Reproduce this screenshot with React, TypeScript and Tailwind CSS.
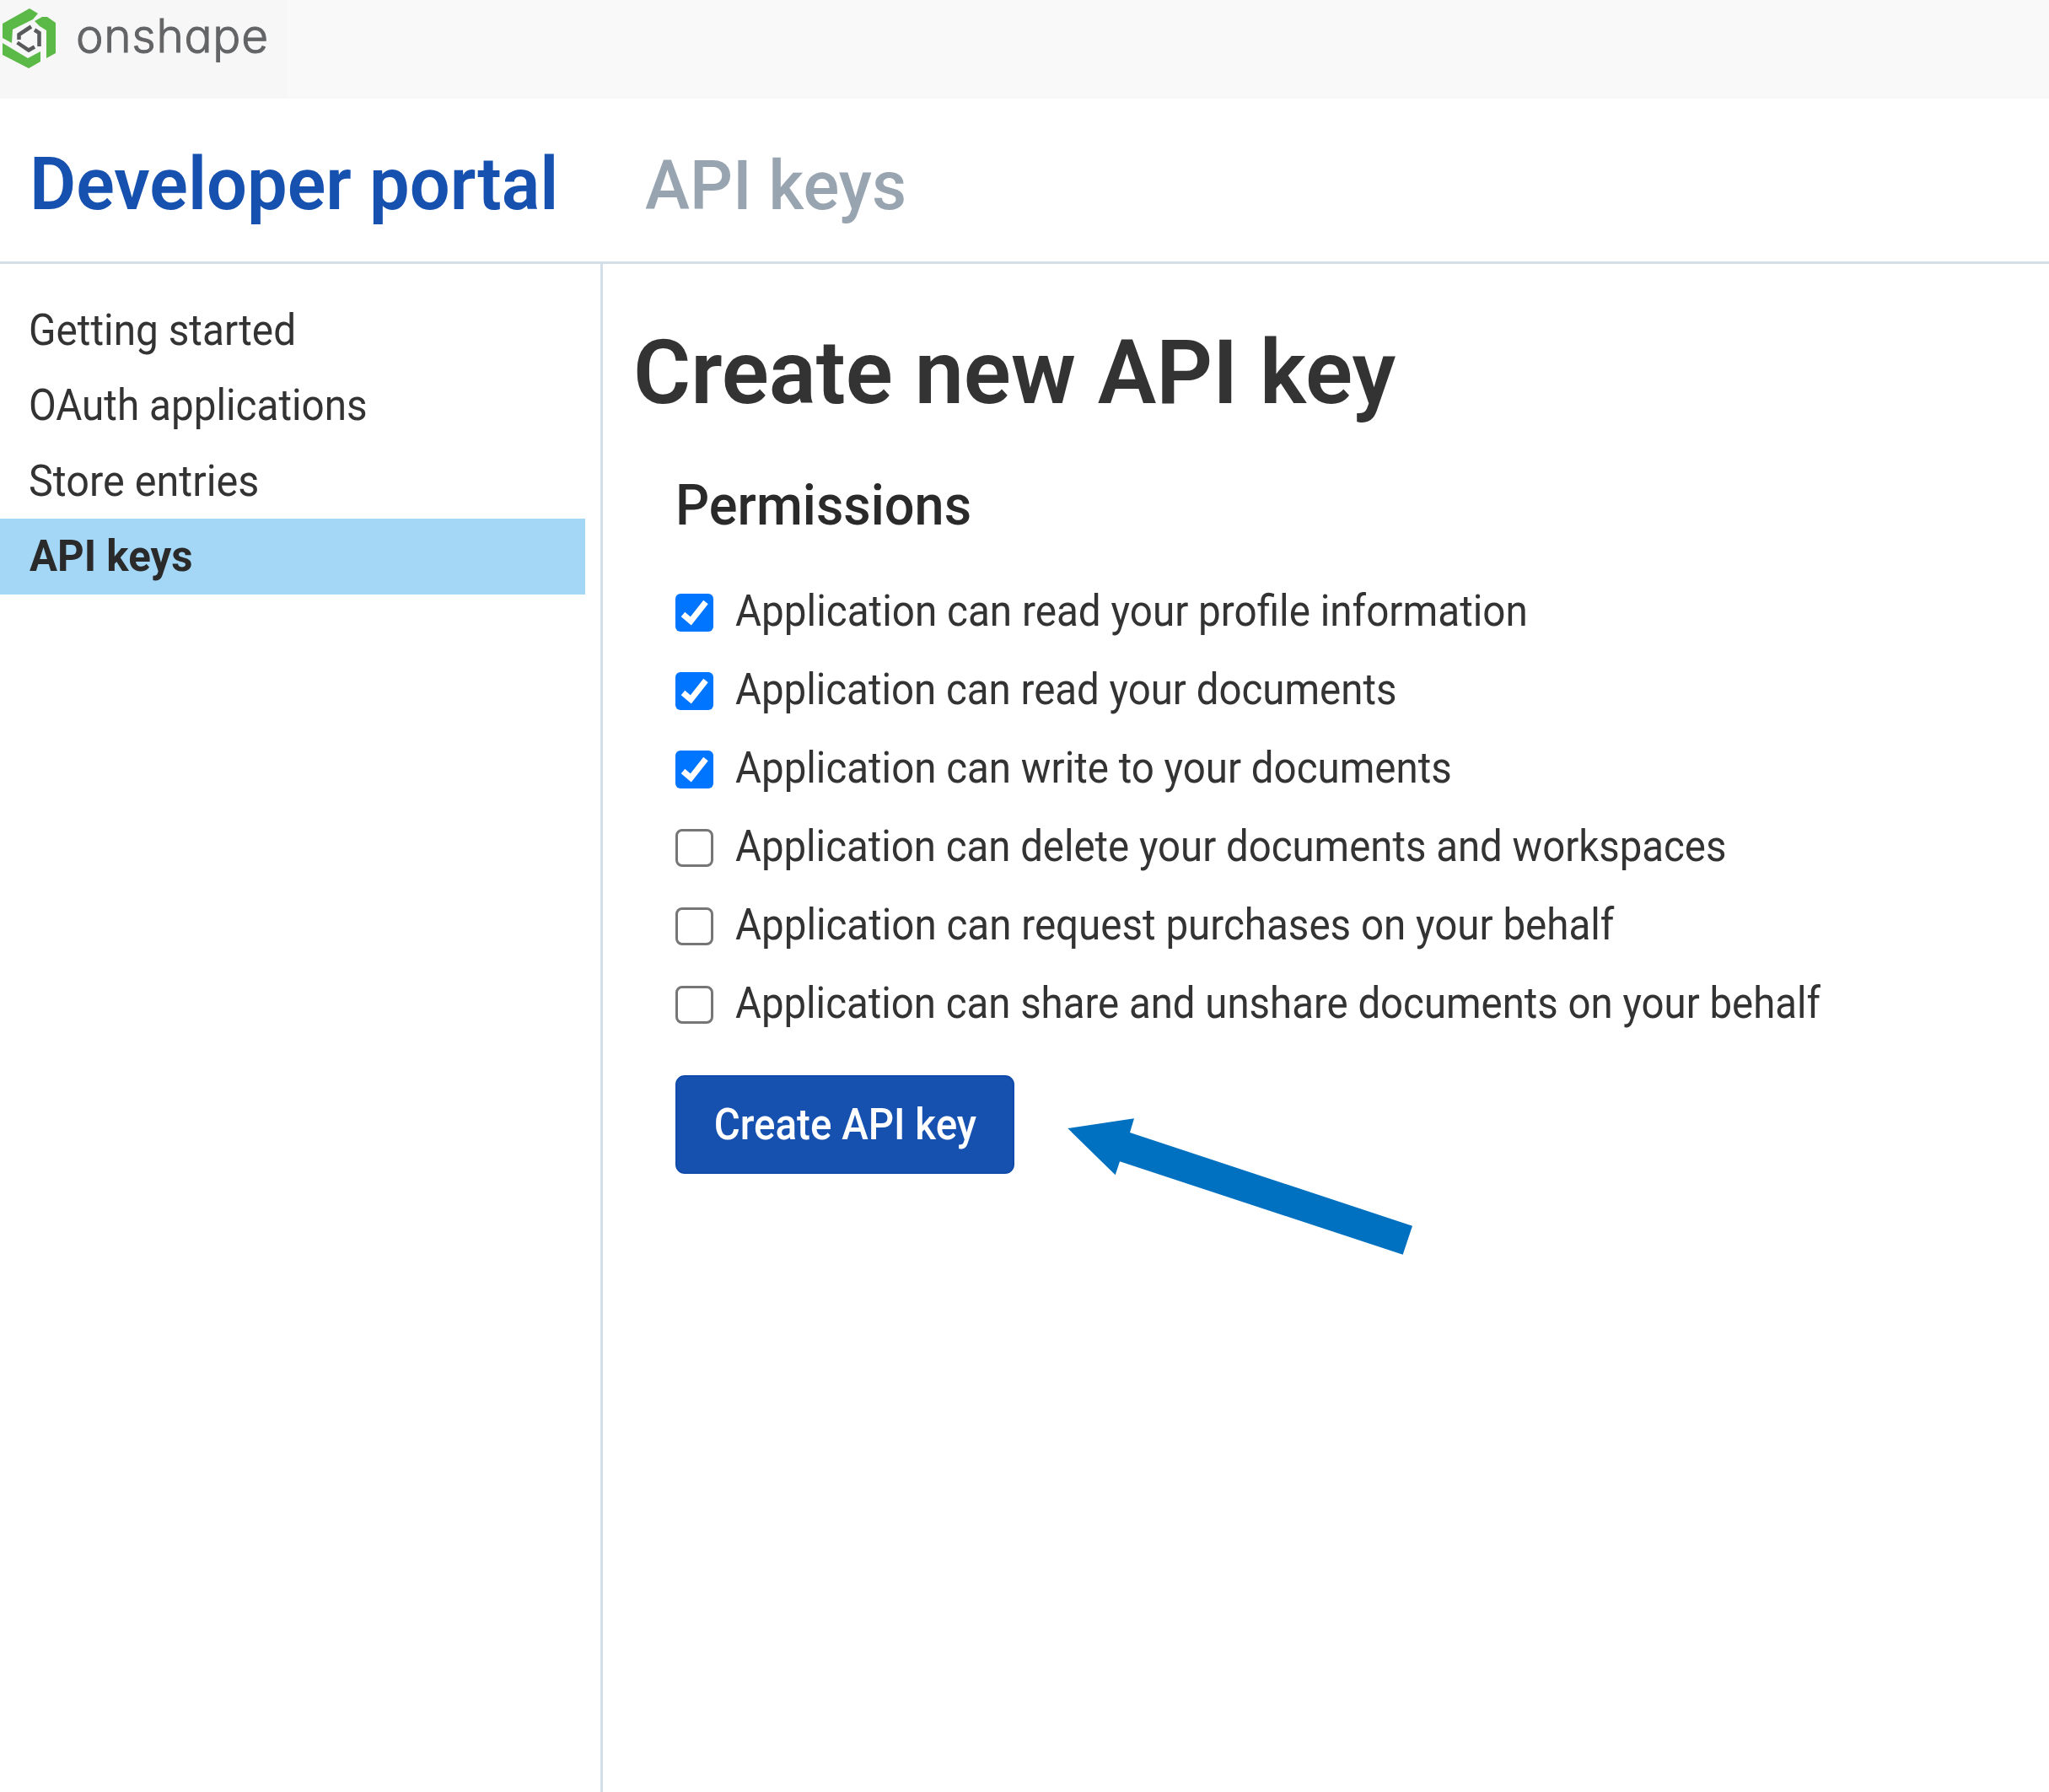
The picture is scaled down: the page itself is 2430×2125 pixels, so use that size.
const NAV = [
  { label: 'Getting started', active: false, width: 'scale-x-[0.918]' },
  { label: 'OAuth applications', active: false, width: 'scale-x-[0.916]' },
  { label: 'Store entries', active: false, width: 'scale-x-[0.934]' },
  { label: 'API keys', active: true, width: 'scale-x-[0.946]' },
];

const PERMISSIONS = [
  { label: 'Application can read your profile information', granted: true, width: 'scale-x-[0.916]' },
  { label: 'Application can read your documents', granted: true, width: 'scale-x-[0.912]' },
  { label: 'Application can write to your documents', granted: true, width: 'scale-x-[0.913]' },
  { label: 'Application can delete your documents and workspaces', granted: false, width: 'scale-x-[0.911]' },
  { label: 'Application can request purchases on your behalf', granted: false, width: 'scale-x-[0.914]' },
  { label: 'Application can share and unshare documents on your behalf', granted: false, width: 'scale-x-[0.911]' },
];

function LogoMark() {
  return (
    <svg className="h-[85px] w-[70px] shrink-0" viewBox="0 0 70 85" fill="none">
      <path
        fill="#5bba47"
        d="M3 28 35 10 45 16 39 23 15 35 14 51 3 45ZM41 25 50 20H56L66 27V63L55 69V36L47 31ZM3 51 33 69 48 61V73L34 81 3 65Z"
      />
      <path
        stroke="#58595b"
        strokeWidth="4.5"
        d="M37 31.5 22.5 41V47M41 35.5 46.5 39V55M20.5 50.5 34 59.5 41 55.5"
      />
    </svg>
  );
}

function Checkbox({ checked }: { checked: boolean }) {
  if (!checked) {
    return <span className="mt-[5px] size-[45px] shrink-0 rounded-[8px] border-3 border-[#767676] bg-white" />;
  }
  return (
    <span className="mt-[5px] size-[45px] shrink-0 rounded-[6px] bg-[#0075ff]">
      <svg viewBox="0 0 45 45" fill="none">
        <path stroke="#fff" strokeWidth="7" d="M9 24.5 18.3 32.5 36 10" />
      </svg>
    </span>
  );
}

export default function App() {
  return (
    <div className="flex h-[2125px] w-[2430px] flex-col overflow-hidden bg-white font-[Roboto,sans-serif] text-[#333333]">
      <div className="flex h-[117px] shrink-0 bg-[#f9f9f9]">
        <div className="flex w-[341px] items-start bg-[#f7f7f7]">
          <LogoMark />
          <span className="ml-5 font-[Inter,sans-serif] text-[55px] leading-[84px] font-light tracking-[0.7px] text-[#636466] [-webkit-text-stroke:1px_#636466] [font-feature-settings:'cv11']">
            onshape
          </span>
        </div>
      </div>

      <header className="flex h-[196px] shrink-0 items-baseline border-b-3 border-[#d2dfe8] pt-[51px] pl-[35px]">
        <span className="origin-left scale-x-[0.975] text-[87px] leading-[100px] font-semibold text-[#1651b0]">
          Developer portal
        </span>
        <span className="ml-[87px] origin-left scale-x-[0.975] text-[82px] leading-[100px] font-medium text-[#98a4b0]">
          API keys
        </span>
      </header>

      <div className="flex min-h-0 flex-1">
        <nav className="flex w-[715px] shrink-0 flex-col border-r-3 border-[#d2dfe8] pt-[34px] pr-[18px] text-[52px] leading-[89.4px]">
          {NAV.map(({ label, active, width }) => (
            <a key={label} className={active ? 'bg-[#a4d7f5] pl-[35px] font-bold text-[#2a2a2a]' : 'pl-[34px]'}>
              <span className={`inline-block origin-left ${width}`}>{label}</span>
            </a>
          ))}
        </nav>

        <main className="flex flex-1 flex-col items-start pt-[68.5px] pl-[36px]">
          <h1 className="origin-left scale-x-[0.983] text-[106px] leading-[120px] font-semibold">Create new API key</h1>
          <section className="mt-[57.5px] flex flex-col items-start pl-[50px]">
            <h2 className="origin-left scale-x-[0.934] text-[67.5px] leading-[80px] font-medium text-[#2a2a2a]">
              Permissions
            </h2>
            <ul className="mt-[39px]">
              {PERMISSIONS.map(({ label, granted, width }) => (
                <li key={label} className="flex h-[92.9px] items-center gap-[26px]">
                  <Checkbox checked={granted} />
                  <span className={`mt-0.5 origin-left text-[52px] whitespace-nowrap ${width}`}>{label}</span>
                </li>
              ))}
            </ul>
            <div className="relative mt-10">
              <button className="h-[117px] w-[402px] rounded-[11px] border-2 border-[#104aab] bg-[#1751b0] text-[52px] font-medium text-white">
                <span className="inline-block scale-x-[0.914] whitespace-nowrap">Create API key</span>
              </button>
              <svg className="absolute top-[51px] left-[464px] h-[163px] w-[412px]" viewBox="0 0 412 163">
                <path fill="#0070c0" d="M1.3 12 80 0.3 75 17 410 127.7 398.7 161.7 63 51.3 57.7 67.3Z" />
              </svg>
            </div>
          </section>
        </main>
      </div>
    </div>
  );
}
